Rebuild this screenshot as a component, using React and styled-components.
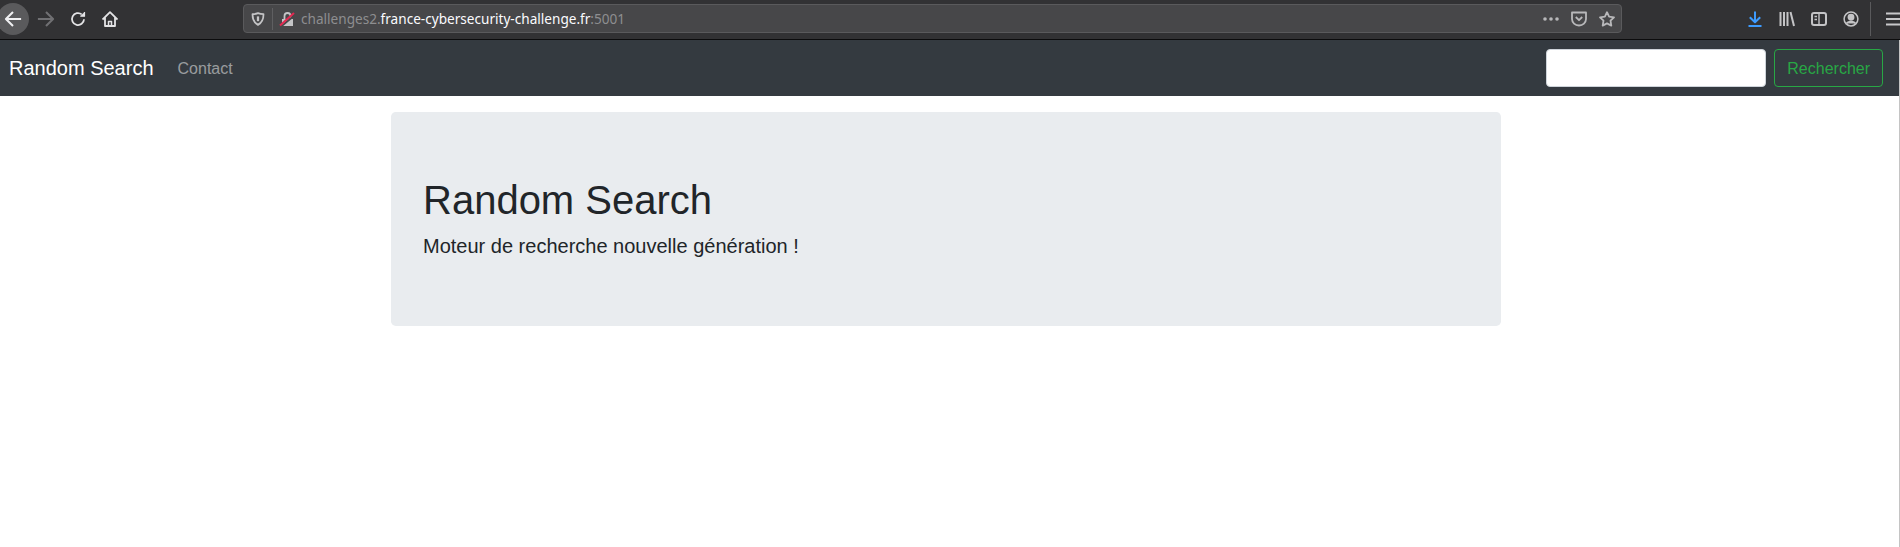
import styled, { createGlobalStyle } from "styled-components"

const GlobalStyle = createGlobalStyle`
  html, body {
    margin: 0;
    background: #fff;
  }
  body {
    font-family: "Liberation Sans", Arial, sans-serif;
    font-size: 16px;
    color: #212529;
  }
`

const Page = styled.div`
  height: 547px;
  overflow: hidden;
  display: flex;
  flex-direction: column;
`

const Toolbar = styled.div`
  height: 40px;
  flex: none;
  background: #323234;
  border-bottom: 1px solid #0c0c0d;
  padding-bottom: 1px;
  box-sizing: border-box;
  display: flex;
  align-items: center;
  font-family: "Noto Sans", sans-serif;
`

const NavButtons = styled.div`
  width: 243px;
  flex: none;
  display: flex;
  align-items: center;
`

const BackButton = styled.div`
  width: 32px;
  height: 32px;
  margin: 0 1px 0 -3px;
  border-radius: 50%;
  background: #5a5a5c;
  display: flex;
  align-items: center;
  justify-content: center;
  flex: none;
`

const NavIcon = styled.div`
  width: 32px;
  flex: none;
  display: flex;
  justify-content: center;
`

const UrlBar = styled.div`
  width: 1379px;
  height: 29px;
  flex: none;
  margin-bottom: 1px;
  background: #474749;
  border: 1px solid #5a5a5c;
  border-radius: 4px;
  box-sizing: border-box;
  display: flex;
  align-items: center;
  font-size: 13.6px;
  padding-left: 7px;
`

const Divider = styled.div`
  width: 1px;
  height: 22px;
  background: #5f5f61;
  margin: 0 6px 0 7px;
`

const UrlText = styled.div`
  flex: 1;
  margin-left: 6px;
  color: #8e8e90;
  white-space: nowrap;
`

const UrlHost = styled.span`
  color: #fbfbfe;
`

const UrlActions = styled.div`
  display: flex;
  align-items: center;
  gap: 12px;
  padding-right: 6px;
`

const RightTools = styled.div`
  flex: 1;
  display: flex;
  align-items: center;
  justify-content: flex-end;
`

const ToolIcon = styled.div`
  width: 32px;
  flex: none;
  display: flex;
  justify-content: center;
`

const ToolSeparator = styled.div`
  width: 1px;
  height: 34px;
  background: #5a5a5c;
  margin: 0 15px 0 3px;
`

const MenuIcon = styled.div`
  width: 14px;
  flex: none;
  display: flex;
`

const Content = styled.div`
  flex: 1;
  border-right: 1px solid #c4c4c4;
`

const Navbar = styled.nav`
  height: 56px;
  background: #343a40;
  display: flex;
  align-items: center;
  padding: 0 16px 0 9px;
`

const Brand = styled.a`
  color: #fff;
  font-size: 20px;
  margin-right: 16px;
`

const NavLink = styled.a`
  color: rgba(255, 255, 255, 0.5);
  padding: 2px 8px 0;
  flex: 1;
`

const SearchInput = styled.input`
  width: 220px;
  height: 38px;
  box-sizing: border-box;
  background: #fff;
  border: 1px solid #ced4da;
  border-radius: 4px;
  margin-right: 8px;
`

const SearchButton = styled.button`
  height: 38px;
  padding: 2px 12px 0;
  background: transparent;
  border: 1px solid #28a745;
  border-radius: 4px;
  color: #28a745;
  font-family: inherit;
  font-size: 16px;
`

const Main = styled.main`
  width: 1110px;
  margin: 16px 0 0 391px;
`

const Jumbotron = styled.section`
  background: #e9ecef;
  border-radius: 4.8px;
  padding: 64px 32px;
  height: 213.5px;
  box-sizing: border-box;
`

const Title = styled.h1`
  font-size: 40px;
  font-weight: 400;
  line-height: 48px;
  margin: 0 0 7px;
`

const Lead = styled.p`
  font-size: 20px;
  line-height: 30px;
  margin: 0;
`

const Glyph = ({ size = 16, color = "#e3e3e5", sw = 1.8, children }) => (
  <svg width={size} height={size} viewBox="0 0 16 16" fill="none" stroke={color} strokeWidth={sw} strokeLinejoin="round">
    {children}
  </svg>
)

const App = () => {
  return (
    <Page>
      <GlobalStyle />
      <Toolbar>
        <NavButtons>
          <BackButton>
            <Glyph size={18} color="#f0f0f2"><path d="M15.200 8H1.500M8 1.700 1.700 8 8 14.300" /></Glyph>
          </BackButton>
          <NavIcon>
            <Glyph size={18} color="#707073"><path d="M.8 8h13.700M8 1.700 14.300 8 8 14.300" /></Glyph>
          </NavIcon>
          <NavIcon>
            <Glyph><path d="M14 8.200a6 6 0 1 1-2.200-4.800" /><path d="M14.500 1v4.200h-4.200" fill="#e3e3e5" strokeWidth="1.200" /></Glyph>
          </NavIcon>
          <NavIcon>
            <Glyph><path d="M.5 8.500 8 1.200l7.500 7.300M3 6.800V15h10V6.800" /><path d="M6.500 15v-4.500h3V15" strokeWidth="1.500" /></Glyph>
          </NavIcon>
        </NavButtons>
        <UrlBar>
          <Glyph size={14} color="#c4c4c6" sw={2}>
            <path d="M8 1.300c2.200.9 4.200 1.200 6.300 1.200 0 5.800-2 9.800-6.300 12.200C3.700 12.300 1.700 8.300 1.700 2.500 3.800 2.500 5.800 2.200 8 1.300Z" />
            <path d="M8 5v5.500" strokeWidth="2.600" />
          </Glyph>
          <Divider />
          <svg width="16" height="16" viewBox="0 0 16 16" fill="none">
            <path d="M3 8h11v7H3z" fill="#c4c4c6" />
            <path d="M5.500 8V5a3 3 0 0 1 6 0v3" stroke="#c4c4c6" strokeWidth="1.800" />
            <path d="M2 15.500 16 4" stroke="#474749" strokeWidth="2" />
            <path d="M1 14.500 15 2" stroke="#e22850" strokeWidth="2" />
          </svg>
          <UrlText>
            challenges2.<UrlHost>france-cybersecurity-challenge.fr</UrlHost>:5001
          </UrlText>
          <UrlActions>
            <svg width="16" height="16" viewBox="0 0 16 16" fill="#b8b8ba">
              <circle cx="2" cy="8" r="1.800" />
              <circle cx="8" cy="8" r="1.800" />
              <circle cx="14" cy="8" r="1.800" />
            </svg>
            <Glyph color="#b8b8ba"><path d="M1 1.500h14v6.500a7 6.500 0 0 1-14 0Z" /><path d="m4.800 6 3.200 3.200L11.200 6" /></Glyph>
            <Glyph color="#b8b8ba"><path d="m8 1.200 2.100 4.400 4.900.7-3.500 3.400.8 4.900L8 12.400l-4.300 2.200.8-4.900L1 6.300l4.900-.7Z" /></Glyph>
          </UrlActions>
        </UrlBar>
        <RightTools>
          <ToolIcon>
            <Glyph color="#3d9bff" sw={2}><path d="M8 .5v10M2.800 6.200 8 11.300l5.200-5.100M1.500 15h13" /></Glyph>
          </ToolIcon>
          <ToolIcon>
            <Glyph color="#c4c4c6" sw={2}><path d="M1.500 1v14M5 1v14M8.500 1v14M11.500 1l3.500 14" /></Glyph>
          </ToolIcon>
          <ToolIcon>
            <Glyph color="#c4c4c6" sw={2}><rect x="1" y="2" width="14" height="12" rx="2" /><path d="M8 2v12M3.500 5.500H6M3.500 8.500H6" strokeWidth="1.400" /></Glyph>
          </ToolIcon>
          <ToolIcon>
            <Glyph color="#c4c4c6" sw={1.500}>
              <circle cx="8" cy="8" r="6.900" />
              <circle cx="8" cy="6.300" r="2.700" fill="#c4c4c6" />
              <path d="M3.500 12.500c1-2.800 8-2.800 9 0" fill="#c4c4c6" />
            </Glyph>
          </ToolIcon>
          <ToolSeparator />
          <MenuIcon>
            <svg width="14" height="16" viewBox="0 0 14 16" fill="#c8c8ca">
              <rect x="0" y="1.500" width="14" height="2" />
              <rect x="0" y="7" width="14" height="2" />
              <rect x="0" y="12.500" width="14" height="2" />
            </svg>
          </MenuIcon>
        </RightTools>
      </Toolbar>
      <Content>
        <Navbar>
          <Brand>Random Search</Brand>
          <NavLink>Contact</NavLink>
          <SearchInput />
          <SearchButton>Rechercher</SearchButton>
        </Navbar>
        <Main>
          <Jumbotron>
            <Title>Random Search</Title>
            <Lead>Moteur de recherche nouvelle génération !</Lead>
          </Jumbotron>
        </Main>
      </Content>
    </Page>
  )
}

export default App
